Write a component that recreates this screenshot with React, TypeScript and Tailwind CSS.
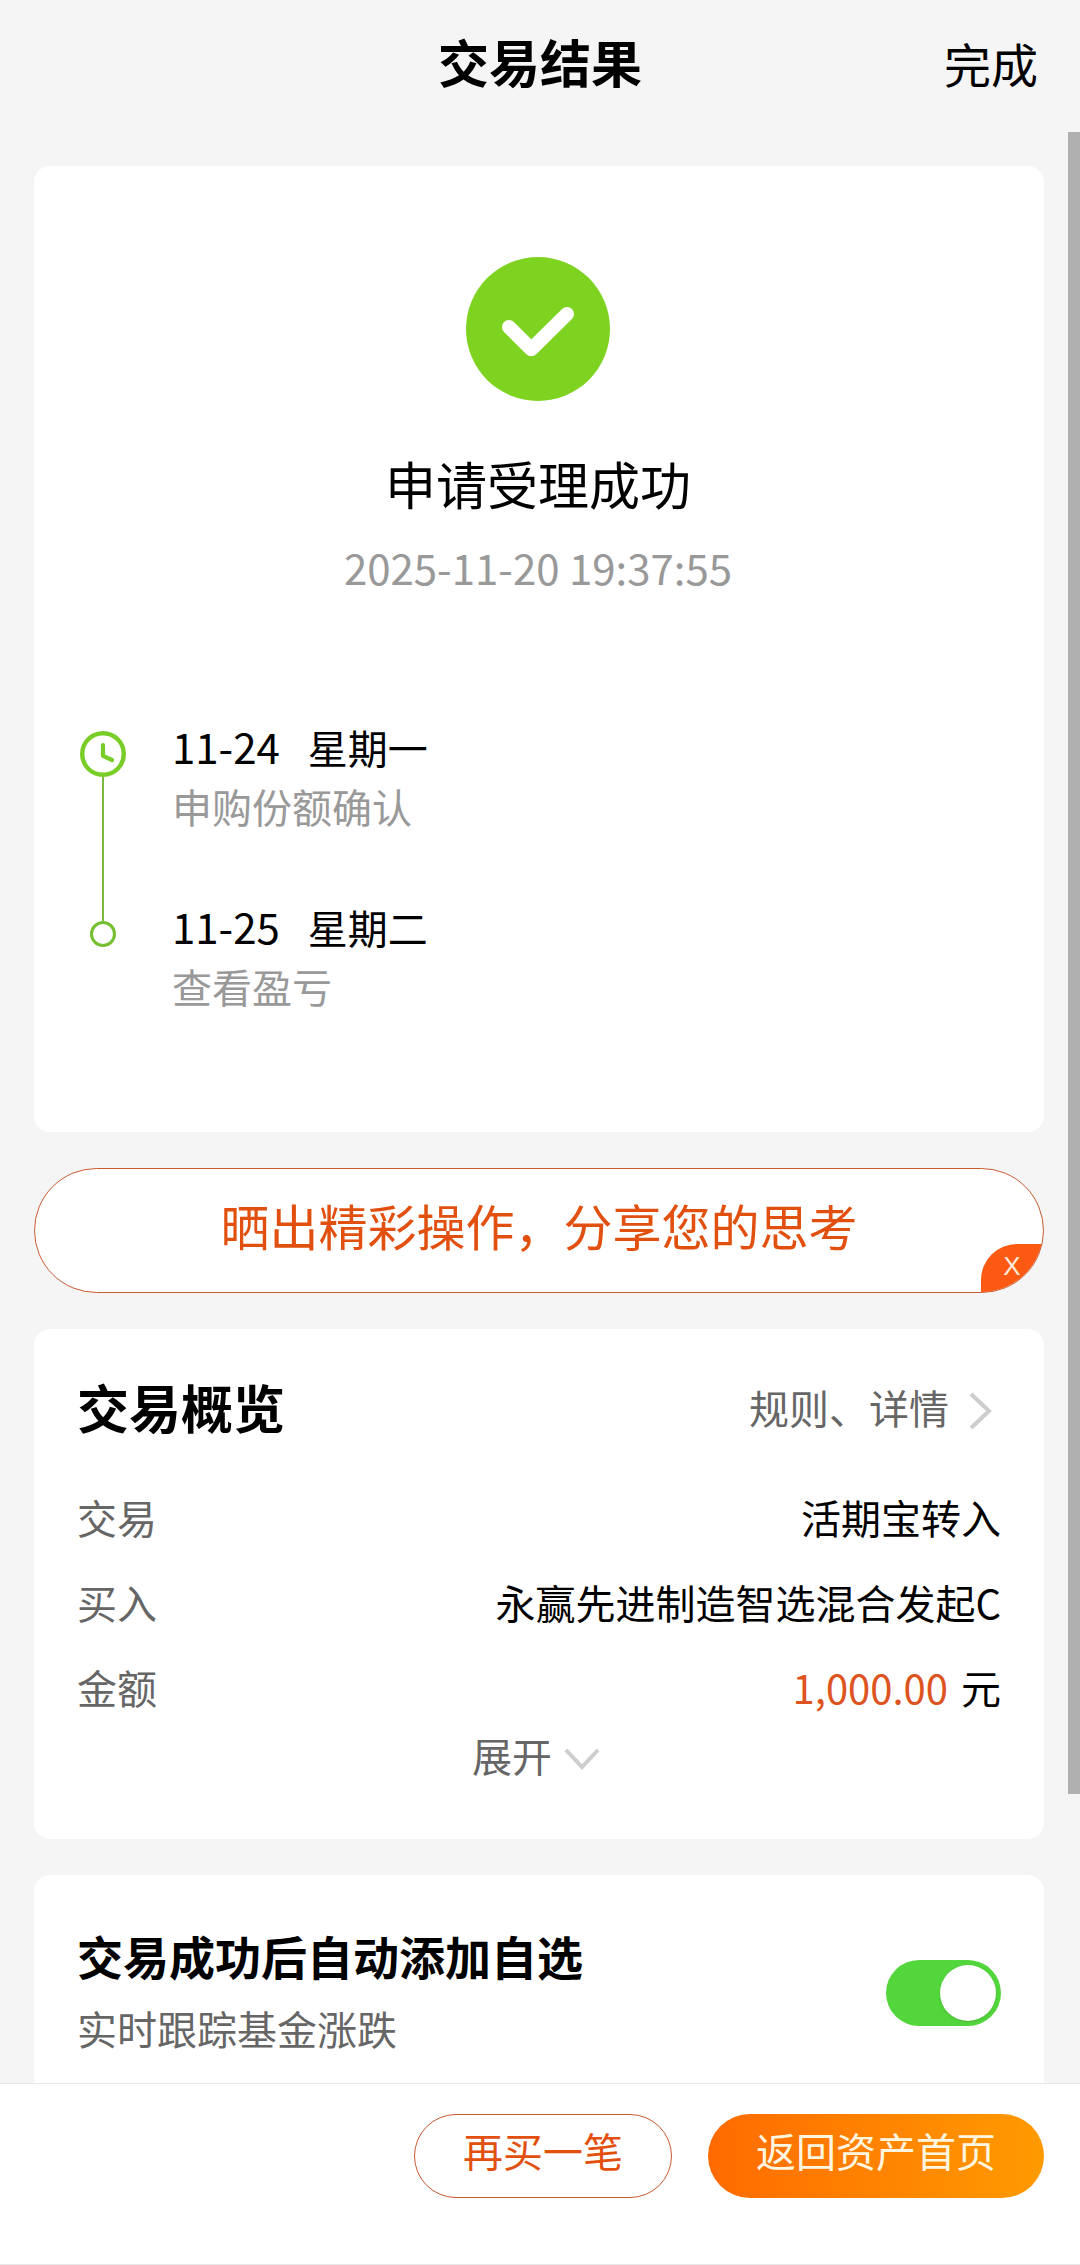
import { useState } from 'react';

const steps = [
  { date: '11-24', day: '星期一', label: '申购份额确认' },
  { date: '11-25', day: '星期二', label: '查看盈亏' },
];

function SuccessIcon() {
  return (
    <svg className="size-36" viewBox="0 0 144 144" fill="none" aria-hidden="true">
      <circle cx="72" cy="72" r="72" fill="#7ed321" />
      <path d="M43 70L65.3 92.3L101 57" stroke="#fff" strokeWidth="14" strokeLinecap="round" strokeLinejoin="round" />
    </svg>
  );
}

function ClockIcon() {
  return (
    <svg className="size-[46px] shrink-0" viewBox="0 0 46 46" fill="none" stroke="#78cd27" strokeLinecap="round" strokeLinejoin="round" aria-hidden="true">
      <circle cx="23" cy="23" r="20.8" strokeWidth="4.4" />
      <path d="M23 14.2V24.8L32 29" strokeWidth="4.2" />
    </svg>
  );
}

function Timeline() {
  return (
    <ol>
      {steps.map((step, i) => (
        <li key={step.date} className="flex gap-[46px]">
          <div className="flex w-[46px] flex-col items-center">
            {i === 0 ? (
              <>
                <div className="h-[15px]" />
                <ClockIcon />
                <div className="w-[2px] flex-1 bg-[#7ab83f]" />
              </>
            ) : (
              <>
                <div className="h-[25px] w-[2px] bg-[#7ab83f]" />
                <div className="size-[26px] rounded-full border-3 border-[#76bf2e]" />
              </>
            )}
          </div>
          <div className={i === 0 ? 'pb-[60px]' : ''}>
            <p className="flex h-[60px] items-baseline gap-7 leading-[60px]">
              <span className="text-[42px]">{step.date}</span>
              <span className="text-[40px]">{step.day}</span>
            </p>
            <p className="text-[40px] leading-[60px] text-[#999]">{step.label}</p>
          </div>
        </li>
      ))}
    </ol>
  );
}

function ShareBanner() {
  return (
    <div className="relative h-[125px] shrink-0 overflow-hidden rounded-full border border-[#c85a30] bg-white">
      <button type="button" className="size-full pb-3 text-[49px] text-[#e2500f]">
        晒出精彩操作，分享您的思考
      </button>
      <button
        type="button"
        aria-label="关闭"
        className="absolute right-0 bottom-0 h-12 w-[62px] rounded-tl-[36px] bg-[#fc5a12] pb-1 font-['Liberation_Sans',sans-serif] text-[26px] text-[#ffeadb]"
      >
        X
      </button>
    </div>
  );
}

function Row({ name, children }: { name: string; children: React.ReactNode }) {
  return (
    <div className="flex justify-between leading-[85px]">
      <dt className="text-[#666]">{name}</dt>
      <dd>{children}</dd>
    </div>
  );
}

function Overview() {
  const [open, setOpen] = useState(false);
  return (
    <section className="shrink-0 rounded-2xl bg-white px-[43px] pt-10 pb-[59px] text-[40px]">
      <div className="flex h-[76px] items-center justify-between">
        <h2 className="text-[52px] font-bold">交易概览</h2>
        <a href="#rules" className="flex items-center gap-5 pr-2 text-[#666]">
          规则、详情
          <svg className="mt-2 h-10 w-6" viewBox="0 0 24 40" fill="none" stroke="#cdcdcd" strokeWidth="4" aria-hidden="true">
            <path d="M2 3L20 20L2 37" />
          </svg>
        </a>
      </div>
      <dl className="mt-[30px]">
        <Row name="交易">活期宝转入</Row>
        <Row name="买入">永赢先进制造智选混合发起C</Row>
        <Row name="金额">
          <span className="mr-1 text-[#dd5420]">1,000.00</span> 元
        </Row>
      </dl>
      <button
        type="button"
        aria-expanded={open}
        onClick={() => setOpen(!open)}
        className="mx-auto flex h-[50px] items-center gap-3 pr-1.5 text-[#666]"
      >
        展开
        <svg className="mt-2 h-6 w-9" viewBox="0 0 36 24" fill="none" stroke="#cdcdcd" strokeWidth="4" aria-hidden="true">
          <path d="M2 3L18 20L34 3" />
        </svg>
      </button>
    </section>
  );
}

function AutoFollow() {
  const [on, setOn] = useState(true);
  return (
    <section className="flex shrink-0 items-center justify-between rounded-2xl bg-white px-[43px] pt-[42px] pb-16">
      <label htmlFor="auto-follow" className="pb-1.5">
        <span className="block text-[46px] leading-[76px] font-bold">交易成功后自动添加自选</span>
        <span className="block text-[40px] leading-[70px] text-[#666]">实时跟踪基金涨跌</span>
      </label>
      <input
        id="auto-follow"
        type="checkbox"
        role="switch"
        checked={on}
        onChange={(e) => setOn(e.target.checked)}
        className="flex h-[66px] w-[115px] appearance-none items-center rounded-full bg-[#ddd] px-[5px] before:size-14 before:rounded-full before:bg-white before:shadow-sm checked:justify-end checked:bg-[#53d53c]"
      />
    </section>
  );
}

export default function App() {
  return (
    <div className="flex h-screen flex-col bg-[#f5f5f5] font-['Noto_Sans_CJK_SC',sans-serif] text-black">
      <header className="grid h-[132px] shrink-0 grid-cols-[1fr_auto_1fr] items-center pb-1.5">
        <h1 className="col-start-2 pb-1 text-[51px] font-bold">交易结果</h1>
        <button type="button" className="mr-[42px] justify-self-end text-[47px]">
          完成
        </button>
      </header>

      <main className="relative min-h-0 flex-1 overflow-hidden">
        <div className="flex flex-col gap-9 px-9 pt-[34px] pl-[34px]">
          <section className="shrink-0 rounded-2xl bg-white px-[46px] pt-[91px] pb-[116px]">
            <div className="flex flex-col items-center pr-0.5">
              <SuccessIcon />
              <h2 className="mt-[42px] text-[51px] leading-[80px]">申请受理成功</h2>
              <time className="mt-[14px] text-[42px] leading-[60px] text-[#999]">2025-11-20 19:37:55</time>
            </div>
            <div className="mt-[119px]">
              <Timeline />
            </div>
          </section>
          <ShareBanner />
          <Overview />
          <AutoFollow />
        </div>
        <div className="absolute top-0 right-0 h-[85.2%] w-3 bg-[#b0b0b0]" />
      </main>

      <footer className="flex shrink-0 justify-end gap-9 border-y border-[#e8e8e8] bg-white px-9 pt-[30px] pb-[66px] text-[40px]">
        <button type="button" className="h-[84px] rounded-full border border-[#c85a30] px-12 pb-3 text-[#e2500f]">
          再买一笔
        </button>
        <button type="button" className="h-[84px] rounded-full bg-linear-to-r from-[#ff6a00] to-[#ff9a00] px-12 pb-3 text-[#fff6e0]">
          返回资产首页
        </button>
      </footer>
    </div>
  );
}
